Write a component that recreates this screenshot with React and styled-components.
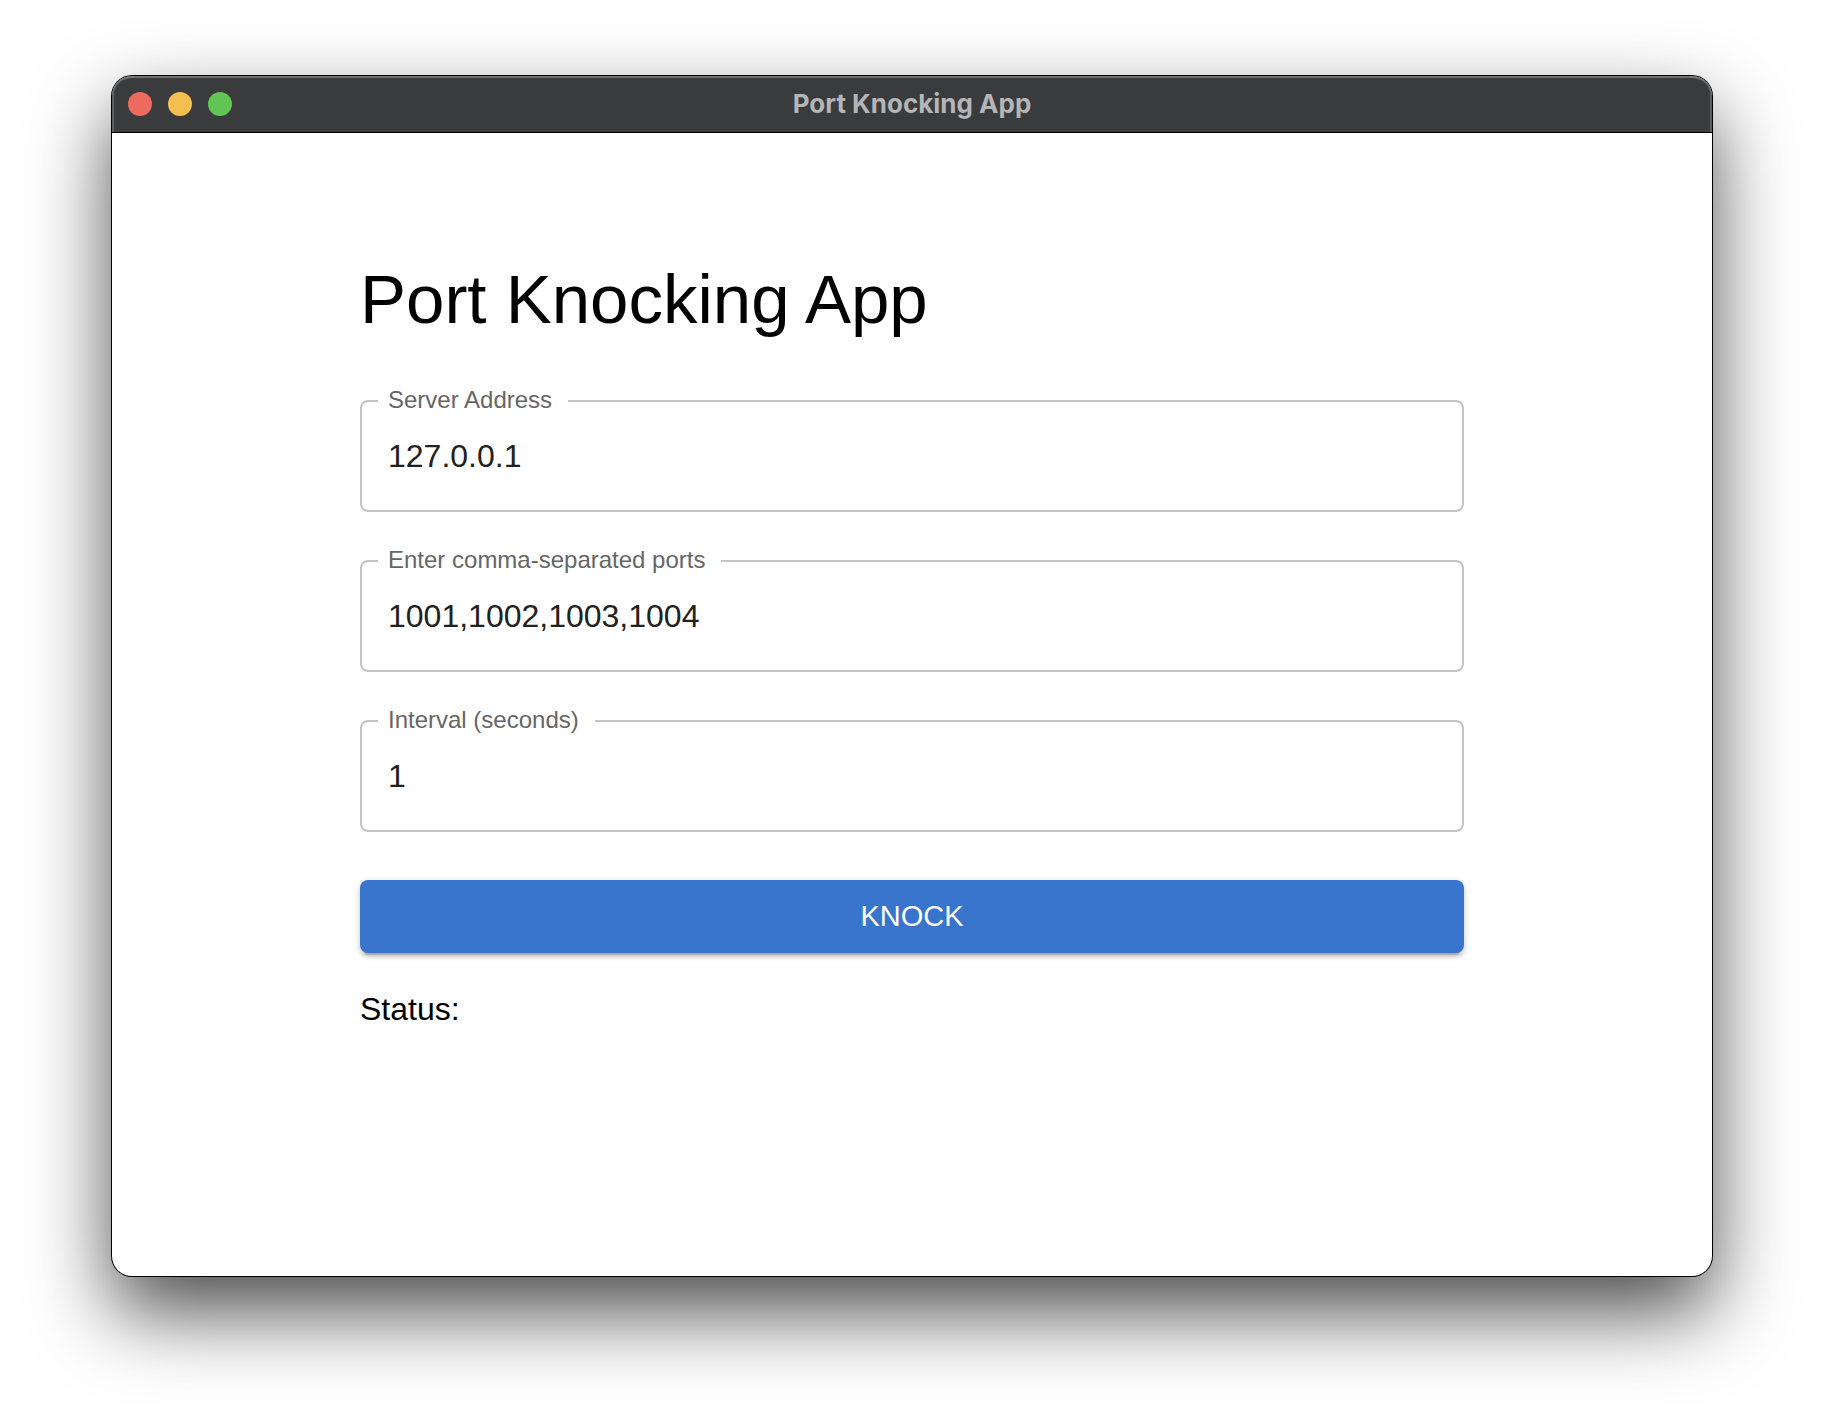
import React, { useState } from "react";
import styled, { createGlobalStyle } from "styled-components";

const GlobalStyle = createGlobalStyle`
  *, *::before, *::after { box-sizing: border-box; }
  body {
    margin: 0;
    background: #fff;
    color: #000;
    font-family: "Liberation Sans", Arial, Helvetica, sans-serif;
  }
`;

const Desktop = styled.div`
  display: flex;
  min-height: 100vh;
  padding: 76px 112px 148px;
`;

const Window = styled.section`
  display: flex;
  flex: 1;
  flex-direction: column;
  min-width: 0;
  overflow: hidden;
  border-radius: 20px;
  background: #fff;
  box-shadow: 0 0 0 1px #000, 0 36px 80px rgba(0, 0, 0, 0.7);
`;

const TitleBar = styled.header`
  display: grid;
  grid-template-columns: 1fr auto 1fr;
  align-items: center;
  height: 57px;
  padding: 0 16px;
  border-bottom: 1px solid #000;
  border-radius: 20px 20px 0 0;
  background: #3a3b3c;
  box-shadow: inset 0 2px 0 #6f7071, inset 2px 0 0 #5c5d5e, inset -2px 0 0 #5c5d5e;
`;

const WindowControls = styled.div`
  display: flex;
  gap: 16px;
`;

const ControlDot = styled.button`
  width: 24px;
  height: 24px;
  padding: 0;
  border: 0;
  border-radius: 50%;
  background: ${(p) => p.$color};
`;

const WindowTitle = styled.span`
  color: #b4b5b7;
  font: 700 26px/32px Inter, "Liberation Sans", sans-serif;
`;

const Content = styled.main`
  width: 100%;
  max-width: 1200px;
  margin: 0 auto;
  padding: 125px 48px 48px;
`;

const Heading = styled.h1`
  margin: 0 0 58px;
  font-size: 69px;
  font-weight: 400;
  line-height: 84px;
`;

const Form = styled.form`
  display: flex;
  flex-direction: column;
  gap: 48px;
`;

const Field = styled.div`
  position: relative;
  display: flex;
`;

const FieldLabel = styled.label`
  position: absolute;
  top: -14px;
  left: 18px;
  padding: 0 16px 0 10px;
  background: #fff;
  color: #666;
  font-size: 24px;
  line-height: 28px;
`;

const FieldInput = styled.input`
  width: 100%;
  height: 112px;
  padding: 0 26px;
  border: 2px solid #c4c4c4;
  border-radius: 8px;
  outline: 0;
  background: transparent;
  color: #212121;
  font-family: inherit;
  font-size: 32px;

  &:focus { border-color: #3874cb; }
`;

const KnockButton = styled.button`
  height: 73px;
  border: 0;
  border-radius: 8px;
  background: #3874cb;
  box-shadow:
    0 6px 2px -4px rgba(0, 0, 0, 0.2),
    0 4px 4px 0 rgba(0, 0, 0, 0.14),
    0 2px 10px 0 rgba(0, 0, 0, 0.12);
  color: #fff;
  font-family: inherit;
  font-size: 29px;
  text-transform: uppercase;
`;

const Status = styled.p`
  margin: 32px 0 0;
  font-size: 32px;
  line-height: 48px;
`;

const controls = [
  { label: "Close", color: "#ed6a5e" },
  { label: "Minimize", color: "#f5bf4f" },
  { label: "Zoom", color: "#61c554" },
];

const fields = [
  { id: "address", label: "Server Address" },
  { id: "ports", label: "Enter comma-separated ports" },
  { id: "interval", label: "Interval (seconds)" },
];

export default function App() {
  const [values, setValues] = useState({
    address: "127.0.0.1",
    ports: "1001,1002,1003,1004",
    interval: "1",
  });

  return (
    <>
      <GlobalStyle />
      <Desktop>
        <Window>
          <TitleBar>
            <WindowControls>
              {controls.map((c) => (
                <ControlDot key={c.label} type="button" aria-label={c.label} $color={c.color} />
              ))}
            </WindowControls>
            <WindowTitle>Port Knocking App</WindowTitle>
          </TitleBar>
          <Content>
            <Heading>Port Knocking App</Heading>
            <Form onSubmit={(e) => e.preventDefault()}>
              {fields.map((f) => (
                <Field key={f.id}>
                  <FieldInput
                    id={f.id}
                    type="text"
                    value={values[f.id]}
                    onChange={(e) => setValues({ ...values, [f.id]: e.target.value })}
                  />
                  <FieldLabel htmlFor={f.id}>{f.label}</FieldLabel>
                </Field>
              ))}
              <KnockButton type="submit">Knock</KnockButton>
            </Form>
            <Status>Status:</Status>
          </Content>
        </Window>
      </Desktop>
    </>
  );
}
